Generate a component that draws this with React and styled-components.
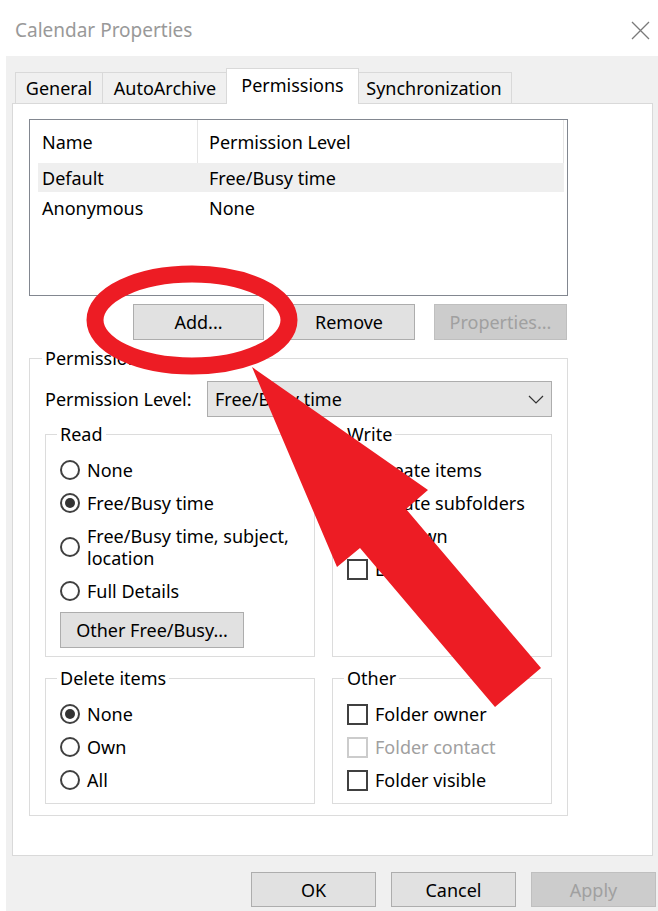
import styled, { createGlobalStyle } from "styled-components";

const GlobalStyle = createGlobalStyle`
  html, body {
    margin: 0;
    padding: 0;
    background: #fff;
  }
  body {
    font-family: "Noto Sans", "DejaVu Sans", sans-serif;
    font-size: 18px;
    color: #000;
  }
  * { box-sizing: border-box; }
`;

const tabs = [
  { label: "General", w: 88 },
  { label: "AutoArchive", w: 126 },
  { label: "Permissions", w: 133, active: true },
  { label: "Synchronization", w: 156 },
];

const readOptions = [
  { label: "None" },
  { label: "Free/Busy time", checked: true },
  { label: <>Free/Busy time, subject,<br />location</> },
  { label: "Full Details" },
];

const writeOptions = ["Create items", "Create subfolders", "Edit own", "Edit all"];

const deleteOptions = [
  { label: "None", checked: true },
  { label: "Own" },
  { label: "All" },
];

const otherOptions = [
  { label: "Folder owner" },
  { label: "Folder contact", disabled: true },
  { label: "Folder visible" },
];

const Radio = ({ checked, children }) => (
  <Option>
    <RadioMark $checked={checked} />
    <span>{children}</span>
  </Option>
);

const Check = ({ disabled, children }) => (
  <Option $disabled={disabled}>
    <CheckMark $disabled={disabled} />
    <span>{children}</span>
  </Option>
);

export default function App() {
  return (
    <>
      <GlobalStyle />
      <Window>
        <TitleBar>
          <Title>Calendar Properties</Title>
          <svg width="19" height="19" viewBox="0 0 19 19">
            <path d="M1 1 L18 18 M18 1 L1 18" stroke="#7a7a7a" strokeWidth="1.3" fill="none" />
          </svg>
        </TitleBar>

        <Body>
          <TabStrip>
            {tabs.map((t) => (
              <Tab key={t.label} $w={t.w} $active={t.active}>{t.label}</Tab>
            ))}
          </TabStrip>

          <Panel>
            <ListBox>
              <HeaderRow>
                <HeadCell>Name</HeadCell>
                <HeadCell $second>Permission Level</HeadCell>
              </HeaderRow>
              <ListRow $selected>
                <Cell>Default</Cell>
                <Cell $second>Free/Busy time</Cell>
              </ListRow>
              <ListRow>
                <Cell>Anonymous</Cell>
                <Cell $second>None</Cell>
              </ListRow>
            </ListBox>

            <ButtonRow>
              <Button $w={131}>Add...</Button>
              <Button $w={132}>Remove</Button>
              <Button $w={133} disabled>Properties...</Button>
            </ButtonRow>

            <Group $outer>
              <Legend>Permissions</Legend>
              <LevelRow>
                <LevelLabel>Permission Level:</LevelLabel>
                <Select>
                  <span>Free/Busy time</span>
                  <svg width="16" height="9" viewBox="0 0 16 9">
                    <polyline points="1,1 8,8 15,1" stroke="#333" strokeWidth="1.2" fill="none" />
                  </svg>
                </Select>
              </LevelRow>

              <GroupGrid>
                <Group>
                  <Legend>Read</Legend>
                  {readOptions.map((o, i) => (
                    <Radio key={i} checked={o.checked}>{o.label}</Radio>
                  ))}
                  <Button $w={184} $top={4.5} $bottom={2}>Other Free/Busy...</Button>
                </Group>
                <Group>
                  <Legend>Write</Legend>
                  {writeOptions.map((label) => (
                    <Check key={label}>{label}</Check>
                  ))}
                </Group>
                <Group>
                  <Legend>Delete items</Legend>
                  {deleteOptions.map((o) => (
                    <Radio key={o.label} checked={o.checked}>{o.label}</Radio>
                  ))}
                </Group>
                <Group>
                  <Legend>Other</Legend>
                  {otherOptions.map((o) => (
                    <Check key={o.label} disabled={o.disabled}>{o.label}</Check>
                  ))}
                </Group>
              </GroupGrid>
            </Group>
          </Panel>

          <Footer>
            <Button $w={125} $h={35}>OK</Button>
            <Button $w={125} $h={35}>Cancel</Button>
            <Button $w={125} $h={35} disabled>Apply</Button>
          </Footer>
        </Body>

        {/* red callout: ring round the Add button and the arrow pointing at it */}
        <Markup width="658" height="911" viewBox="0 0 658 911">
          <ellipse cx="192" cy="320" rx="97" ry="46" stroke="#ed1c24" strokeWidth="17" fill="none" />
          <polygon
            points="252,367 428,490 406,509 541,668 495,707 360,548 337,567"
            fill="#ed1c24"
          />
        </Markup>
      </Window>
    </>
  );
}

const Window = styled.div`
  position: relative;
  width: 658px;
  height: 911px;
  overflow: hidden;
  background: #fff;
`;

const TitleBar = styled.div`
  height: 56px;
  display: flex;
  align-items: center;
  justify-content: space-between;
  padding: 4px 8px 0 15px;
`;

const Title = styled.div`
  color: #999;
  font-size: 19px;
`;

const Body = styled.div`
  margin-left: 6px;
  height: 855px;
  background: #f0f0f0;
  display: flex;
  flex-direction: column;
`;

const TabStrip = styled.div`
  display: flex;
  align-items: flex-end;
  height: 47px;
  padding-left: 9px;
`;

const Tab = styled.div`
  width: ${(p) => p.$w}px;
  height: ${(p) => (p.$active ? 36 : 31)}px;
  display: flex;
  align-items: center;
  justify-content: center;
  border: 1px solid #d9d9d9;
  border-bottom: none;
  background: ${(p) => (p.$active ? "#fff" : "#f0f0f0")};
  margin-left: ${(p) => (p.$active ? -2 : -1)}px;
  margin-right: ${(p) => (p.$active ? -2 : 0)}px;
  margin-bottom: ${(p) => (p.$active ? -1 : 0)}px;
  padding-bottom: ${(p) => (p.$active ? 4 : 0)}px;
  position: relative;
  z-index: ${(p) => (p.$active ? 2 : 1)};
  white-space: nowrap;

  &:first-child {
    margin-left: 0;
  }
`;

const Panel = styled.div`
  margin: 0 5px 0 6px;
  height: 753px;
  background: #fff;
  border: 1px solid #d9d9d9;
  padding: 15px 16px 0;
`;

const ListBox = styled.div`
  width: 539px;
  height: 177px;
  border: 1px solid #828790;
  padding: 0 3px 0 8px;
`;

const HeaderRow = styled.div`
  display: grid;
  grid-template-columns: 160px 1fr;
  height: 43px;
  border-right: 1px solid #e5e5e5;
`;

const HeadCell = styled.div`
  display: flex;
  align-items: center;
  padding-left: ${(p) => (p.$second ? 11 : 4)}px;
  border-right: ${(p) => (p.$second ? "none" : "1px solid #e5e5e5")};
`;

const ListRow = styled.div`
  display: grid;
  grid-template-columns: 160px 1fr;
  height: ${(p) => (p.$selected ? 29 : 31)}px;
  background: ${(p) => (p.$selected ? "#efefef" : "transparent")};
`;

const Cell = styled.div`
  display: flex;
  align-items: center;
  padding-left: ${(p) => (p.$second ? 11 : 4)}px;
`;

const ButtonRow = styled.div`
  width: 539px;
  display: flex;
  justify-content: flex-end;
  gap: 19px;
  margin-top: 8px;
  padding-right: 1px;
`;

const Button = styled.button`
  width: ${(p) => p.$w}px;
  height: ${(p) => p.$h || 36}px;
  margin-top: ${(p) => p.$top || 0}px;
  margin-bottom: ${(p) => p.$bottom || 0}px;
  background: #e1e1e1;
  border: 1px solid #adadad;
  font-family: inherit;
  font-size: 18px;
  color: #000;
  padding: 0;

  &:disabled {
    background: #cccccc;
    border-color: #bfbfbf;
    color: #a0a0a0;
  }
`;

const Group = styled.fieldset`
  margin: 0;
  min-width: 0;
  border: 1px solid #dcdcdc;
  padding: ${(p) => (p.$outer ? "12px 15px 11px 15px" : "8.5px 14px 6px 14px")};
  ${(p) => p.$outer && "width: 539px; margin-top: 7px;"}
`;

const Legend = styled.legend`
  margin-left: -3px;
  padding: 0 3px;
  line-height: 22px;
`;

const LevelRow = styled.div`
  display: flex;
  align-items: center;
  height: 36px;
`;

const LevelLabel = styled.div`
  width: 162px;
`;

const Select = styled.div`
  flex: 1;
  height: 36px;
  display: flex;
  align-items: center;
  justify-content: space-between;
  padding: 0 7px 0 7px;
  background: #e5e5e5;
  border: 1px solid #adadad;
`;

const GroupGrid = styled.div`
  display: grid;
  grid-template-columns: 270px 220px;
  column-gap: 17px;
  row-gap: 10px;
  margin-top: 6px;
`;

const Option = styled.div`
  display: flex;
  align-items: center;
  gap: 7px;
  line-height: 22px;
  padding: 5.5px 0;
  color: ${(p) => (p.$disabled ? "#a0a0a0" : "#000")};
`;

const RadioMark = styled.span`
  flex: none;
  width: 20px;
  height: 20px;
  border-radius: 50%;
  border: 2px solid #404040;
  background: #fff;
  display: flex;
  align-items: center;
  justify-content: center;

  &::after {
    content: "";
    width: 10px;
    height: 10px;
    border-radius: 50%;
    background: ${(p) => (p.$checked ? "#333" : "transparent")};
  }
`;

const CheckMark = styled.span`
  flex: none;
  width: 21px;
  height: 21px;
  border: 2px solid ${(p) => (p.$disabled ? "#cccccc" : "#404040")};
  background: #fff;
`;

const Footer = styled.div`
  display: flex;
  justify-content: flex-end;
  gap: 15px;
  padding: 16px 2px 0 0;
`;

const Markup = styled.svg`
  position: absolute;
  inset: 0;
  pointer-events: none;
`;
